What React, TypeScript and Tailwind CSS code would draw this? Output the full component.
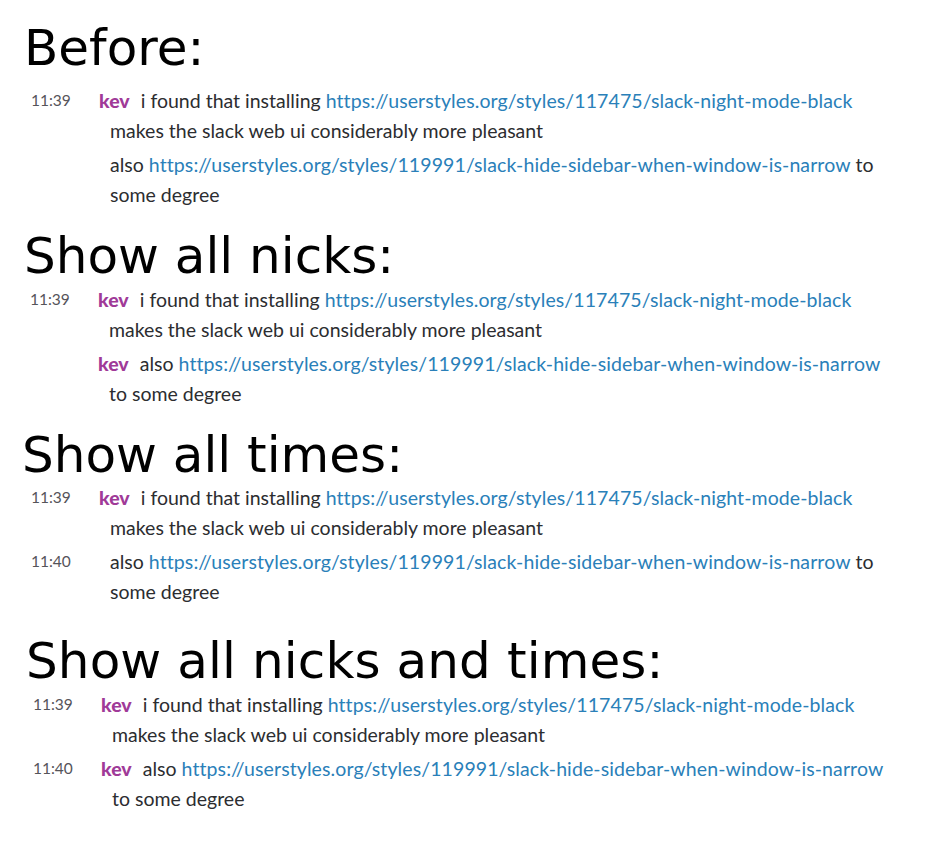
import React from 'react';

const URL1 = 'https://userstyles.org/styles/117475/slack-night-mode-black';
const URL2 = 'https://userstyles.org/styles/119991/slack-hide-sidebar-when-window-is-narrow';

type Variant = {
  title: string;
  secondNick: boolean;
  secondTime: boolean;
  headingClass: string;
  bodyClass: string;
};

const variants: Variant[] = [
  { title: 'Before:', secondNick: false, secondTime: false, headingClass: 'mt-[23px] ml-[24px]', bodyClass: 'mt-[13px] ml-0' },
  { title: 'Show all nicks:', secondNick: true, secondTime: false, headingClass: 'mt-[21px] ml-[24px]', bodyClass: 'mt-[4px] ml-[-1px]' },
  { title: 'Show all times:', secondNick: false, secondTime: true, headingClass: 'mt-[21px] ml-[22px]', bodyClass: 'mt-[3px] ml-0' },
  { title: 'Show all nicks and times:', secondNick: true, secondTime: true, headingClass: 'mt-[29px] ml-[26px] tracking-[0.1px]', bodyClass: 'mt-[4px] ml-[2px]' },
];

const Time = ({ t }: { t?: string }) => (
  <div className="w-[110px] shrink-0 pl-[31px] text-[15.5px] text-[#55545a]">{t}</div>
);

const Nick = () => <span className="-ml-[11px] mr-[11px] font-black text-[#a03a98]">kev</span>;

const Link = ({ href }: { href: string }) => <a className="tracking-[0.1px] text-[#2a80b9]">{href}</a>;

const Line = ({ children, time, gap }: { children: React.ReactNode; time?: string; gap?: boolean }) => (
  <div className={`flex h-[30px] items-center ${gap ? 'mt-[4px]' : ''}`}>
    <Time t={time} />
    <div className="whitespace-nowrap">{children}</div>
  </div>
);

const Section = ({ v }: { v: Variant }) => (
  <section>
    <h2
      className={`${v.headingClass} text-[50px] leading-[50px] text-black`}
      style={{ fontFamily: '"DejaVu Sans", sans-serif' }}
    >
      {v.title}
    </h2>
    <div className={v.bodyClass}>
      <Line time="11:39">
        <Nick />
        i found that installing <Link href={URL1} />
      </Line>
      <Line>makes the slack web ui considerably more pleasant</Line>
      {v.secondNick ? (
        <>
          <Line time={v.secondTime ? '11:40' : undefined} gap>
            <Nick />
            also <Link href={URL2} />
          </Line>
          <Line>to some degree</Line>
        </>
      ) : (
        <>
          <Line time={v.secondTime ? '11:40' : undefined} gap>
            also <Link href={URL2} /> to
          </Line>
          <Line>some degree</Line>
        </>
      )}
    </div>
  </section>
);

export default function App() {
  return (
    <div
      className="h-[847px] w-[925px] overflow-hidden bg-white text-[19.5px] text-[#2c2d30]"
      style={{ fontFamily: 'Lato, "Open Sans", sans-serif' }}
    >
      {variants.map(v => (
        <Section key={v.title} v={v} />
      ))}
    </div>
  );
}
